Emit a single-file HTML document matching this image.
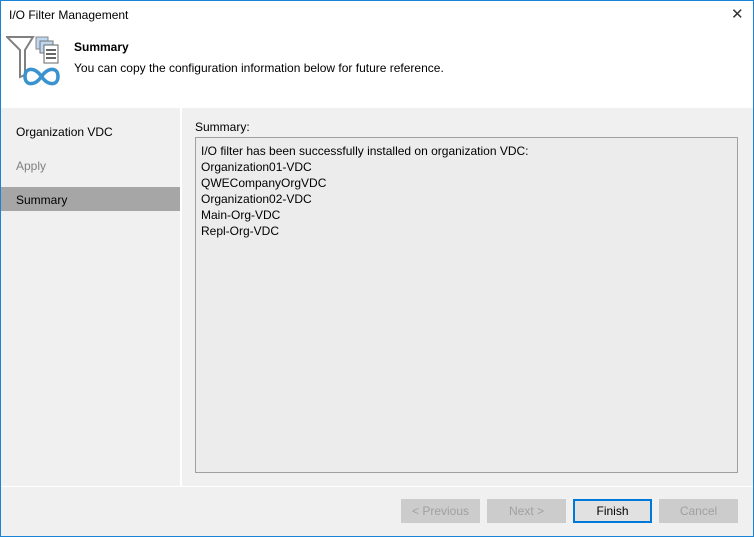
<!DOCTYPE html>
<html><head><style>
*{margin:0;padding:0;box-sizing:border-box}
body{width:754px;height:537px;overflow:hidden;font-family:"Liberation Sans",sans-serif;font-size:12px;color:#000;background:#f0f0f0;position:relative}
.abs{position:absolute}
.win{position:absolute;left:0;top:0;width:754px;height:537px;border:1px solid #1883d7;}
.btn{position:absolute;top:499px;width:79px;height:24px;border:1px solid #cccccc;background:#cccccc;color:#a0a0a0;text-align:center;line-height:22px}
</style></head><body>
<div class="abs" style="left:0;top:0;width:754px;height:108px;background:#fff"></div>
<div class="abs" style="left:9px;top:8px;font-size:12px">I/O Filter Management</div>
<div class="abs" style="left:731px;top:5px;font-size:15px;color:#333">✕</div>
<svg class="abs" style="left:6px;top:33px" width="56" height="58" viewBox="0 0 56 58">
<path d="M1 4 H27 L19 17 V42 L14 44 V17 Z" fill="#fff" stroke="#808080" stroke-width="2"/>
<rect x="30" y="4" width="12" height="12" fill="#bcd7ef" stroke="#888"/>
<rect x="34" y="8" width="13" height="12" fill="#bcd7ef" stroke="#777"/>
<rect x="38" y="12" width="14" height="18" fill="#fff" stroke="#666"/>
<rect x="40" y="16" width="10" height="2" fill="#666"/><rect x="40" y="20" width="10" height="2" fill="#666"/><rect x="40" y="24" width="10" height="2" fill="#666"/>
<path d="M35.5 43.5 C29 34 19 34 19 43.5 C19 53 29 53 35.5 43.5 C42 34 52 34 52 43.5 C52 53 42 53 35.5 43.5 Z" fill="none" stroke="#3a93cf" stroke-width="3.5"/>
</svg>
<div class="abs" style="left:74px;top:40px;font-weight:bold">Summary</div>
<div class="abs" style="left:74px;top:61px">You can copy the configuration information below for future reference.</div>
<div class="abs" style="left:180px;top:108px;width:2px;height:378px;background:#fff"></div>
<div class="abs" style="left:16px;top:125px">Organization VDC</div>
<div class="abs" style="left:16px;top:159px;color:#808080">Apply</div>
<div class="abs" style="left:1px;top:187px;width:179px;height:24px;background:#a6a6a6"></div>
<div class="abs" style="left:16px;top:193px">Summary</div>
<div class="abs" style="left:195px;top:120px">Summary:</div>
<div class="abs" style="left:195px;top:137px;width:543px;height:336px;border:1px solid #a0a0a0;background:#ececec;padding:5px 0 0 5px;line-height:16px">I/O filter has been successfully installed on organization VDC:<br>Organization01-VDC<br>QWECompanyOrgVDC<br>Organization02-VDC<br>Main-Org-VDC<br>Repl-Org-VDC</div>
<div class="abs" style="left:0;top:486px;width:754px;height:1px;background:#fff"></div>
<div class="btn" style="left:401px">&lt; Previous</div>
<div class="btn" style="left:487px">Next &gt;</div>
<div class="btn" style="left:573px;background:#e1e1e1;border:2px solid #0078d7;color:#000;line-height:20px">Finish</div>
<div class="btn" style="left:659px">Cancel</div>
<div class="win"></div>
</body></html>
